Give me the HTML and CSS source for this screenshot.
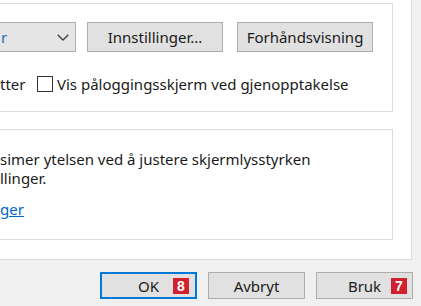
FILE: index.html
```html
<!DOCTYPE html>
<html lang="nb">
<head>
    <meta charset="UTF-8">
    <title>Skjermsparerinnstillinger</title>
    <link rel="stylesheet" href="styles.css">
</head>
<body>
    <div class="dialog">
        <div class="panel">
            <div class="group group-top">
                <div class="row">
                    <div class="select">
                        <span class="select-text">r</span>
                        <svg class="chevron" width="12" height="7" viewBox="0 0 12 7"><polyline points="0.7,0.7 6,6 11.3,0.7" fill="none" stroke="#404040" stroke-width="1.3"/></svg>
                    </div>
                    <button class="btn btn-wide">Innstillinger...</button>
                    <button class="btn btn-wide">Forhåndsvisning</button>
                </div>
                <div class="row row-check">
                    <span class="wait">tter</span>
                    <label class="check"><span class="box"></span>Vis påloggingsskjerm ved gjenopptakelse</label>
                </div>
            </div>

            <div class="group group-power">
                <p>simer ytelsen ved å justere skjermlysstyrken<br>llinger.</p>
                <a href="#" class="link">ger</a>
            </div>
        </div>

        <div class="footer">
            <button class="btn btn-dlg btn-default">OK<span class="badge">8</span></button>
            <button class="btn btn-dlg">Avbryt</button>
            <button class="btn btn-dlg">Bruk<span class="badge badge-bruk">7</span></button>
        </div>
    </div>
</body>
</html>
```

FILE: styles.css
```css
body {
    margin: 0;
    background: #f0f0f0;
    font-family: "Noto Sans", sans-serif;
    font-size: 15px;
    color: #1a1a1a;
    overflow: hidden;
}
.dialog {
    width: 421px;
    height: 306px;
    display: flex;
    flex-direction: column;
}
.panel {
    box-sizing: border-box;
    width: 412px;
    height: 260px;
    background: #fff;
    border-right: 1px solid #dcdcdc;
    border-bottom: 1px solid #dcdcdc;
}
.group {
    box-sizing: border-box;
    margin-right: 18px;
    border: 1px solid #dcdcdc;
    border-left: 0;
}
.group-top {
    margin-top: 3px;
    height: 109px;
    padding-top: 18px;
}
.row {
    display: flex;
    align-items: center;
}
.select {
    box-sizing: border-box;
    width: 76px;
    height: 30px;
    display: flex;
    align-items: center;
    justify-content: space-between;
    padding-right: 6px;
    background: #e5e5e5;
    border: 1px solid #adadad;
    border-left: 0;
    color: #1c6fb8;
}
.select-text {
    margin-left: 1px;
}
.btn {
    position: relative;
    box-sizing: border-box;
    font-family: inherit;
    font-size: 15px;
    color: #1a1a1a;
    background: #e1e1e1;
    border: 1px solid #adadad;
    padding: 0;
}
.btn-wide {
    width: 136px;
    height: 30px;
    margin-left: 11px;
}
.btn-wide + .btn-wide {
    margin-left: 14px;
}
.row-check {
    margin-top: 22px;
}
.wait {
    width: 37px;
}
.check {
    display: flex;
    align-items: center;
}
.box {
    box-sizing: border-box;
    width: 16px;
    height: 16px;
    border: 1px solid #333;
    background: #fff;
    margin-right: 4px;
}
.group-power {
    margin-top: 17px;
    height: 111px;
    padding-top: 20px;
}
.group-power p {
    margin: 0;
    line-height: 19px;
}
.link {
    display: inline-block;
    margin-top: 12px;
    line-height: 19px;
    color: #0066cc;
}
.footer {
    flex: 1;
    display: flex;
    justify-content: flex-end;
    align-items: flex-start;
    gap: 11px;
    padding: 12px 8px 0 0;
}
.btn-dlg {
    width: 97px;
    height: 27px;
}
.btn-default {
    border: 2px solid #0078d7;
}
.badge {
    position: absolute;
    top: 4px;
    right: 6px;
    width: 16px;
    height: 16px;
    background: #d2202e;
    color: #fff;
    font-family: "Liberation Sans", sans-serif;
    font-weight: bold;
    font-size: 14px;
    line-height: 16px;
    text-align: center;
}
.badge-bruk {
    right: 5px;
    top: 5px;
}
```
